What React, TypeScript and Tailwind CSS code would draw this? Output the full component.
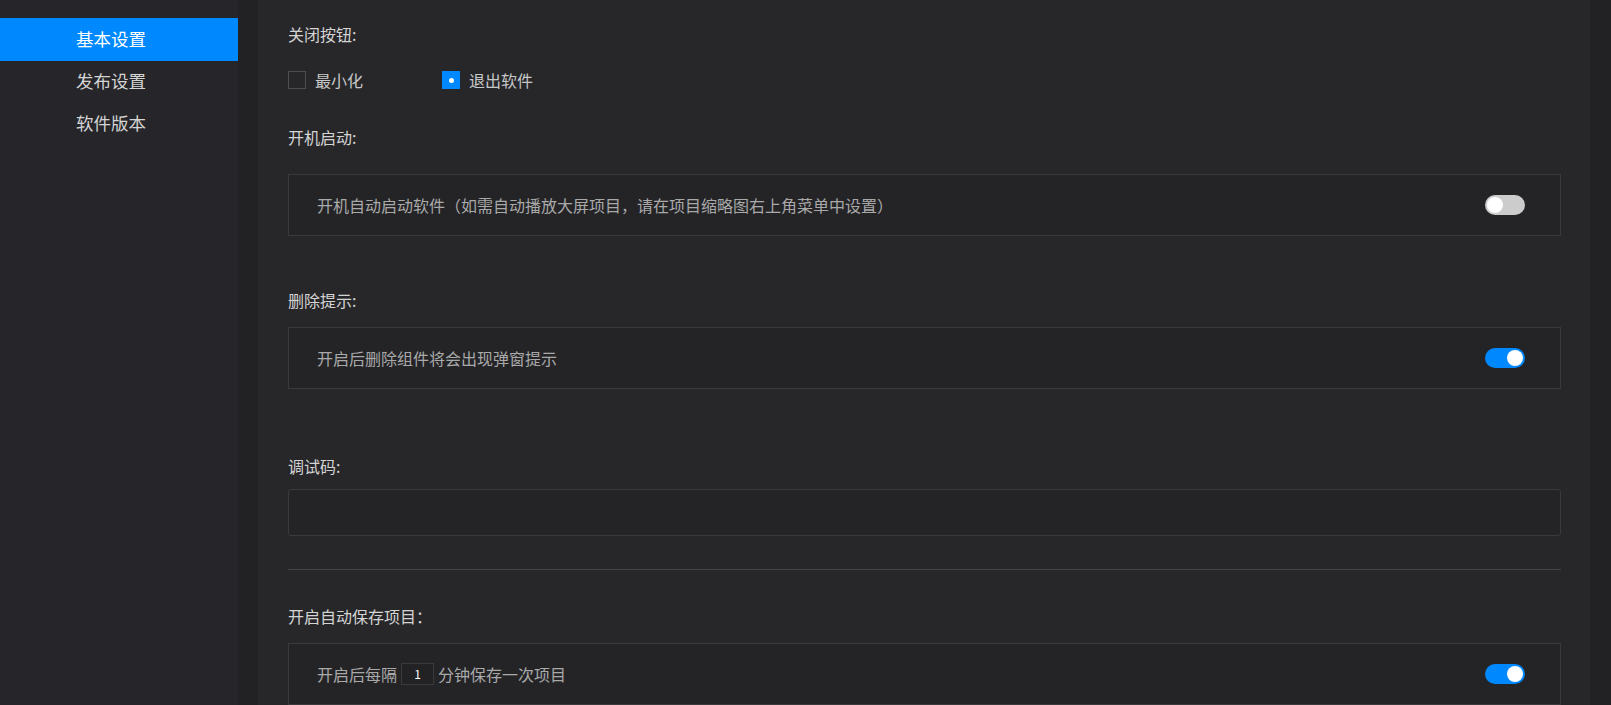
import { useState } from 'react'

const FONT = "font-['Noto_Sans_CJK_SC','Noto_Sans',sans-serif]"

function Toggle({ on, onClick }: { on: boolean; onClick: () => void }) {
  return (
    <button onClick={onClick}
      className={`relative w-[40px] h-[20px] rounded-full flex-shrink-0 ${on ? 'bg-[#0088ff]' : 'bg-[#cccccc]'}`}>
      <span className={`absolute top-[2px] w-[16px] h-[16px] rounded-full bg-white ${on ? 'left-[22px]' : 'left-[2px]'}`} />
    </button>
  )
}

function Check({ checked, label, onClick }: { checked: boolean; label: string; onClick: () => void }) {
  return (
    <label onClick={onClick} className="flex items-center gap-[9px] cursor-pointer">
      <span className={`w-[18px] h-[18px] flex items-center justify-center ${checked ? 'bg-[#0088ff]' : 'border border-[#4d4d50]'}`}>
        {checked && <span className="w-[5px] h-[5px] rounded-full bg-white" />}
      </span>
      <span className="text-[16px] text-[#c8c8c8] leading-[22px]">{label}</span>
    </label>
  )
}

export default function App() {
  const [nav, setNav] = useState(0)
  const [closeMode, setCloseMode] = useState<'min'|'exit'>('exit')
  const [autoStart, setAutoStart] = useState(false)
  const [delTip, setDelTip] = useState(true)
  const [autoSave, setAutoSave] = useState(true)

  const menus = ['基本设置', '发布设置', '软件版本']

  return (
    <div className={`${FONT} flex h-screen overflow-hidden bg-[#27272a]`}>
      {/* 侧栏 */}
      <aside className="w-[238px] flex-shrink-0 bg-[#26262a] pt-[18px]">
        {menus.map((m, i) => (
          <div key={m} onClick={() => setNav(i)}
            className={`h-[43px] -mb-px flex items-center pl-[76px] text-[17.5px] cursor-pointer ${
              nav === i ? 'bg-[#0088ff] text-white' : 'text-[#d4d4d4]'
            }`}>
            {m}
          </div>
        ))}
      </aside>
      <div className="w-[20px] flex-shrink-0 bg-[#222225]" />

      {/* 主体 */}
      <main className="flex-1 pl-[30px] pr-[29px] pt-[23px] bg-[#27272a]">
        <p className="text-[16px] leading-[22px] text-[#d4d4d4]">关闭按钮:</p>
        <div className="flex items-center mt-[24px] h-[22px]">
          <div className="w-[154px]">
            <Check checked={closeMode === 'min'} label="最小化" onClick={() => setCloseMode('min')} />
          </div>
          <Check checked={closeMode === 'exit'} label="退出软件" onClick={() => setCloseMode('exit')} />
        </div>

        <p className="mt-[35px] text-[16px] leading-[22px] text-[#d4d4d4]">开机启动:</p>
        <div className="mt-[26px] h-[62px] border border-[#3a3a3d] bg-[#242427] flex items-center justify-between pl-[28px] pr-[35px]">
          <span className="text-[16px] text-[#a9a9a9]">开机自动启动软件（如需自动播放大屏项目，请在项目缩略图右上角菜单中设置）</span>
          <Toggle on={autoStart} onClick={() => setAutoStart(!autoStart)} />
        </div>

        <p className="mt-[53px] text-[16px] leading-[22px] text-[#d4d4d4]">删除提示:</p>
        <div className="mt-[16px] h-[62px] border border-[#3a3a3d] bg-[#242427] flex items-center justify-between pl-[28px] pr-[35px]">
          <span className="text-[16px] text-[#a9a9a9]">开启后删除组件将会出现弹窗提示</span>
          <Toggle on={delTip} onClick={() => setDelTip(!delTip)} />
        </div>

        <p className="mt-[66px] text-[16px] leading-[22px] text-[#d4d4d4]">调试码:</p>
        <input className="mt-[12px] w-full h-[47px] rounded-[3px] border border-[#3a3a3d] bg-[#242427] outline-none px-3 text-[#ccc]" />

        <div className="mt-[33px] h-px bg-[#454548]" />

        <p className="mt-[35px] text-[16px] leading-[22px] text-[#d4d4d4]">开启自动保存项目：</p>
        <div className="mt-[16px] h-[62px] border border-[#3a3a3d] bg-[#242427] flex items-center justify-between pl-[28px] pr-[35px]">
          <span className="flex items-center text-[16px] text-[#a9a9a9]">
            开启后每隔
            <span className="mx-[4px] w-[33px] h-[22px] border border-[#3a3a3d] bg-[#222224] text-[12px] text-white flex items-center justify-center">1</span>
            分钟保存一次项目
          </span>
          <Toggle on={autoSave} onClick={() => setAutoSave(!autoSave)} />
        </div>
      </main>
      <div className="w-[21px] flex-shrink-0 bg-[#222225]" />
    </div>
  )
}
